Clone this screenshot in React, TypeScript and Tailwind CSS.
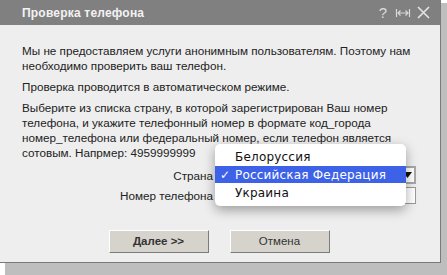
import React from "react";

export default function App() {
  return (
    <div className="relative w-[447px] h-[275px] bg-white overflow-hidden" style={{ fontFamily: '"Liberation Sans", Arial, sans-serif' }}>
      {/* drop shadow */}
      <div className="absolute left-[5px] top-[3px] right-0 bottom-0 bg-[#bebebe]" />
      {/* dialog */}
      <div className="relative w-[441px] h-[263px] bg-[#eeeeee] border-r border-b border-[#7a7a7a] flex flex-col">
        <div className="h-[25px] bg-[#808080] flex items-center pl-[22px] pr-[10px] shrink-0">
          <span className="text-[12px] font-bold text-[#f2f2f2] tracking-[0.2px]">Проверка телефона</span>
          <div className="ml-auto flex items-center text-[#dcdcdc]">
            <span className="text-[15px] leading-none">?</span>
            <svg width="16" height="12" viewBox="0 0 16 12" className="ml-[8px] mt-[1px]">
              <path d="M1.5 2v8M14.5 2v8M3 6h10M5.5 3.5L3 6l2.5 2.5M10.5 3.5L13 6l-2.5 2.5" stroke="#d8d8d8" strokeWidth="1.2" fill="none" />
            </svg>
            <svg width="13" height="13" viewBox="0 0 13 13" className="ml-[6px]">
              <path d="M1 1l11 11M12 1L1 12" stroke="#e4e4e4" strokeWidth="1.6" />
            </svg>
          </div>
        </div>
        <div className="pl-[22px] pr-[10px] pt-[18px] text-[11.7px] leading-[15px] text-[#222]">
          <p>Мы не предоставляем услуги анонимным пользователям. Поэтому нам<br />необходимо проверить ваш телефон.</p>
          <p className="mt-[6px]">Проверка проводится в автоматическом режиме.</p>
          <p className="mt-[6px]">
            Выберите из списка страну, в которой зарегистрирован Ваш номер<br />
            телефона, и укажите телефонный номер в формате код_города<br />
            номер_телефона или федеральный номер, если телефон является<br />
            сотовым. Напрмер: 4959999999
          </p>
          <div className="mt-[6px] grid grid-cols-[191px_200px] gap-x-[3px] gap-y-[3px] items-center">
            <span className="text-right">Страна</span>
            <div className="h-[18px] border-2 border-[#a8a8a8] bg-white flex items-center justify-end pr-[2px]">
              <svg width="9" height="6" viewBox="0 0 9 6"><path d="M0 0h9L4.5 6z" fill="#111" /></svg>
            </div>
            <span className="text-right">Номер телефона</span>
            <div className="h-[17px] border border-[#9a9a9a] bg-white" />
          </div>
        </div>
        <div className="mt-auto mb-[9px] flex justify-center gap-[21px] pr-[2px]">
          <button className="w-[100px] h-[23px] bg-[#d6d3cd] border border-t-white border-l-white border-r-[#7c7c7c] border-b-[#7c7c7c] text-[11.5px] font-bold text-[#333]">Далее &gt;&gt;</button>
          <button className="w-[100px] h-[23px] bg-[#d6d3cd] border border-t-white border-l-white border-r-[#7c7c7c] border-b-[#7c7c7c] text-[11.5px] text-[#333]">Отмена</button>
        </div>
      </div>
      {/* open dropdown menu */}
      <div
        className="absolute left-[215px] top-[144px] w-[191px] h-[62px] bg-white rounded-[5px] shadow-[0_4px_12px_rgba(0,0,0,0.35)] pt-[4px] text-[12px] leading-[18px] text-[#111]"
        style={{ fontFamily: '"DejaVu Sans", Verdana, sans-serif' }}
      >
        <div className="h-[18px] pl-[20px] tracking-[0.2px]">Белоруссия</div>
        <div className="h-[17px] flex items-center bg-[#3d62e8] text-white tracking-[0.2px]">
          <span className="w-[20px] pl-[5px] text-[12px]">✓</span>
          <span>Российская Федерация</span>
        </div>
        <div className="h-[18px] pl-[20px] pt-[1px] leading-[18px] tracking-[0.2px]">Украина</div>
      </div>
    </div>
  );
}
